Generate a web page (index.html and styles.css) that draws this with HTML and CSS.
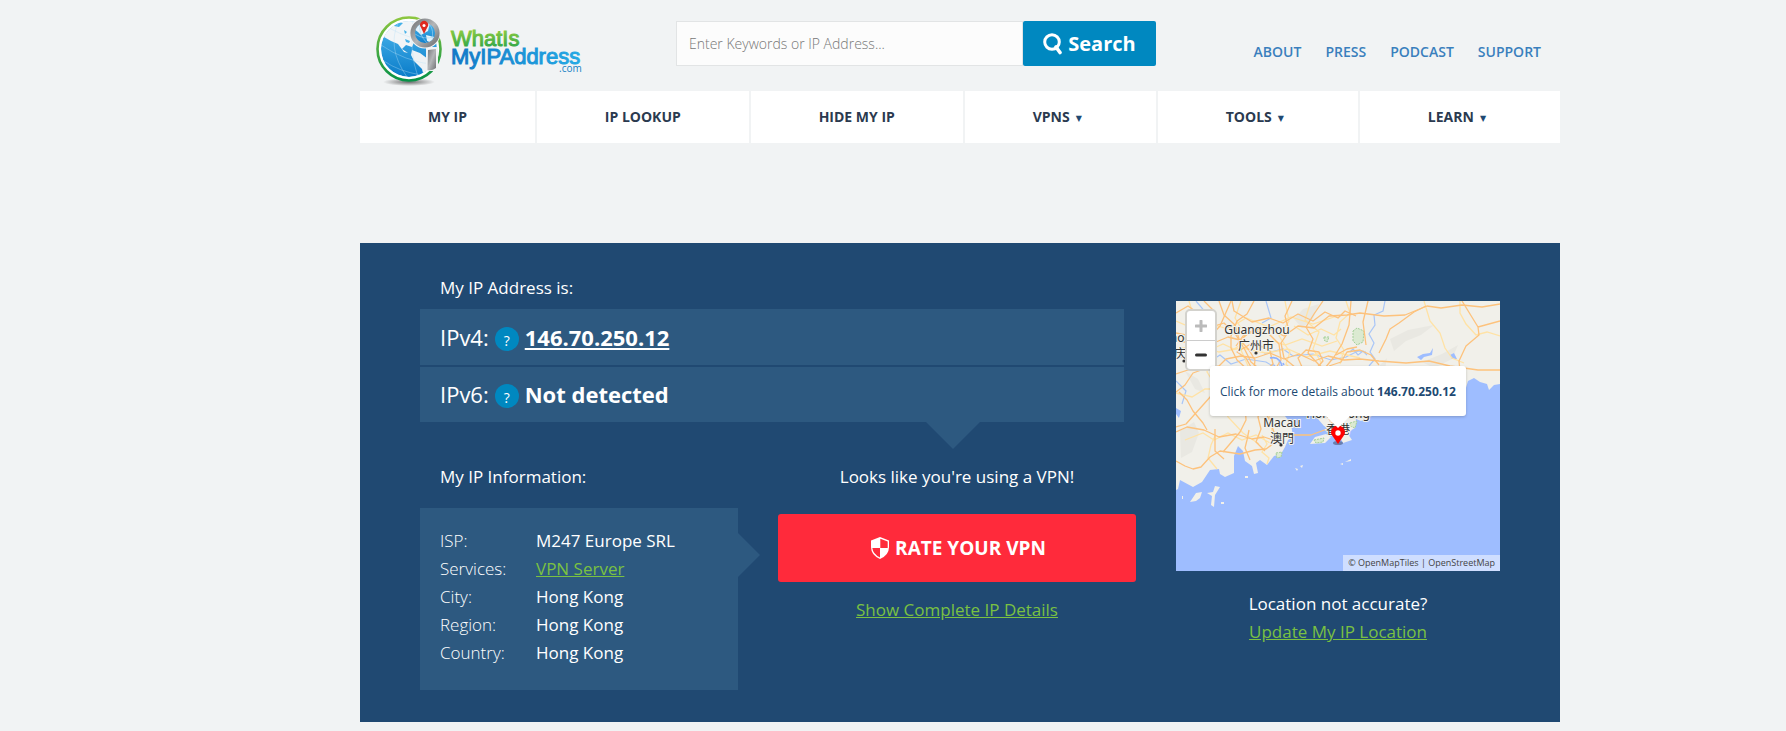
FILE: index.html
```html
<!DOCTYPE html>
<html lang="en">
<head>
<meta charset="utf-8">
<meta name="viewport" content="width=device-width, initial-scale=1">
<title>What Is My IP Address</title>
<link rel="stylesheet" href="styles.css">
</head>
<body>
<div class="page">
  <header class="header">
    <a class="logo" href="#" aria-label="WhatIsMyIPAddress.com home">
      <svg width="210" height="91" viewBox="16 0 210 91">
        <defs>
          <linearGradient id="ring" x1="0" y1="0" x2="0" y2="1"><stop offset="0" stop-color="#8cc63f"/><stop offset="1" stop-color="#079247"/></linearGradient>
          <linearGradient id="sea" x1="0" y1="0" x2="0" y2="1"><stop offset="0" stop-color="#4db8ee"/><stop offset="1" stop-color="#0a7cc9"/></linearGradient>
          <linearGradient id="metal" x1="0" y1="0" x2="1" y2="1"><stop offset="0" stop-color="#77797b"/><stop offset=".5" stop-color="#b4b6b8"/><stop offset="1" stop-color="#707274"/></linearGradient>
          <linearGradient id="green" x1="0" y1="0" x2="0" y2="1"><stop offset=".2" stop-color="#86c83f"/><stop offset=".9" stop-color="#2aa448"/></linearGradient>
          <linearGradient id="blue" x1="0" y1="0" x2="1" y2="0"><stop offset="0" stop-color="#0f78c6"/><stop offset="1" stop-color="#25a9e4"/></linearGradient>
          <radialGradient id="shade"><stop offset="0" stop-color="#333" stop-opacity=".7"/><stop offset="1" stop-color="#333" stop-opacity="0"/></radialGradient>
          <clipPath id="globe"><circle cx="49" cy="49" r="28"/></clipPath>
          <clipPath id="lens"><circle cx="65" cy="33" r="10"/></clipPath>
        </defs>
        <ellipse cx="49" cy="82" rx="26" ry="4" fill="url(#shade)"/>
        <circle cx="49" cy="49" r="31.500" fill="#fff" stroke="url(#ring)" stroke-width="2.600"/>
        <g clip-path="url(#globe)">
          <circle cx="49" cy="49" r="28" fill="url(#sea)"/>
          <path d="M24 37L27 29L37 20L58 18L65 35L59 40L55 40L52 47L46 45L42 49L48 53L44 52L38 44L31 41Z" fill="#f2f5f7"/>
          <path d="M52 50L60 53L68 59L78 59L77 64L69 79L64 77L62 69L54 61L51 55Z" fill="#eef2f5"/>
          <path d="M37 22L43 23L39 27L34 26ZM45 39L50 41L49 43L46 42ZM44 30L47 32L45 34Z" fill="#46b1e8"/>
          <g fill="none" stroke="#b8e1f6" stroke-width=".5" opacity=".75">
            <path d="M21 45Q44 61 75 65M24 61Q38 71 61 75M29 28Q51 40 76 43M39 21Q26 47 47 77M53 20Q49 52 58 77"/>
          </g>
        </g>
        <circle cx="65" cy="33" r="15.500" fill="#f1f3f4"/>
        <path d="M66 47H78V71H66Z" fill="#f1f3f4"/>
        <circle cx="65" cy="33" r="12.300" fill="url(#sea)" stroke="url(#metal)" stroke-width="4.600"/>
        <g clip-path="url(#lens)">
          <path d="M54 29L60 22L70 23L68 31L61 35L58 32ZM66 35L74 37L72 43L67 41Z" fill="#e4f2fa"/>
          <path d="M55 34Q64 40 74 37M60 24Q58 34 67 43M70 25Q74 30 72 41" fill="none" stroke="#a8d9f3" stroke-width=".6"/>
        </g>
        <path d="M64 34L61 27.500A4 4 0 1 1 67.200 27.500Z" fill="#df2a20"/>
        <circle cx="64" cy="25.500" r="1.500" fill="#fff"/>
        <path d="M68 50L76 49V68Q72 71 67.500 70Z" fill="url(#metal)"/>
        <text class="brand brand-green" x="91" y="46">WhatIs</text>
        <text class="brand brand-blue" x="91" y="64">MyIPAddress</text>
        <text class="brand-com" x="199" y="72">.com</text>
      </svg>
    </a>
    <form class="search" role="search">
      <input class="search-input" type="text" aria-label="Search" placeholder="Enter Keywords or IP Address...">
      <button class="search-button" type="button">
        <svg width="20" height="22" viewBox="0 0 20 22" fill="none" stroke="#fff" stroke-width="3"><circle cx="9" cy="9" r="7.300"/><path d="M13 14L17 19.500" stroke-width="3.600" stroke-linecap="round"/></svg>
        Search
      </button>
    </form>
    <nav class="links" aria-label="Site">
      <a href="#">ABOUT</a><a href="#">PRESS</a><a href="#">PODCAST</a><a href="#">SUPPORT</a>
    </nav>
  </header>

  <nav class="menu" aria-label="Main">
    <a href="#">MY IP</a>
    <a href="#">IP LOOKUP</a>
    <a href="#">HIDE MY IP</a>
    <a href="#">VPNS<span class="caret">▼</span></a>
    <a href="#">TOOLS<span class="caret">▼</span></a>
    <a href="#">LEARN<span class="caret">▼</span></a>
  </nav>

  <main class="panel">
    <section class="details">
      <p class="label">My IP Address is:</p>
      <div class="addresses">
        <div class="address"><span>IPv4:</span><button class="help" type="button" aria-label="About IPv4">?</button><a href="#">146.70.250.12</a></div>
        <div class="address"><span>IPv6:</span><button class="help" type="button" aria-label="About IPv6">?</button><strong>Not detected</strong></div>
      </div>
      <div class="columns">
        <div class="info">
          <p class="label">My IP Information:</p>
          <table class="facts">
            <tr><th scope="row">ISP:</th><td>M247 Europe SRL</td></tr>
            <tr><th scope="row">Services:</th><td><a class="green" href="#">VPN Server</a></td></tr>
            <tr><th scope="row">City:</th><td>Hong Kong</td></tr>
            <tr><th scope="row">Region:</th><td>Hong Kong</td></tr>
            <tr><th scope="row">Country:</th><td>Hong Kong</td></tr>
          </table>
        </div>
        <div class="vpn">
          <p>Looks like you're using a VPN!</p>
          <button class="rate" type="button">
            <svg width="18" height="22" viewBox="0 0 18 22"><path d="M9 0L18 3.500V10Q18 18 9 22Q0 18 0 10V3.500Z" fill="#fff"/><path d="M9.300 1.800L16.700 4.500V11H9.300ZM1.300 11H9V20.500Q2 17 1.300 11Z" fill="#ff2a3b"/></svg>
            RATE YOUR VPN
          </button>
          <a class="green" href="#">Show Complete IP Details</a>
        </div>
      </div>
    </section>

    <section class="location">
      <div class="map">
        <svg class="map-art" viewBox="0 0 324 270" preserveAspectRatio="xMidYMid slice" role="img" aria-label="Map of Hong Kong and Guangdong">
          <rect width="324" height="270" fill="#9ebdff"/>
          <path fill="#f1f0ea" d="M0 0H324V83L318 84L313 89L311 83L304 81L298 77L292 80L289 90L278 92L268 99L262 108H240L220 113L196 115L185 120L180 118L179 127L172 131L166 127L155 129L148 125L142 118L138 106L132 98L126 96L121 87L112 84L104 70L97 62L99 74L106 86L108 100L109 115L115 123L117 136L112 139L109 146L105 153L98 155L91 164L84 159L80 162L82 172L78 173L76 165L69 160L67 150L62 145L58 155V172L49 176L44 173L43 168L34 169L26 181L17 186L4 179L2 188L0 189Z"/>
          <g fill="#e9e8e2"><path d="M214 38L232 29L258 24L245 34L230 40L218 50ZM246 61L266 53L282 44L276 58L258 67ZM174 78L198 70L211 57L208 74L188 84ZM4 130L18 121L23 132L16 151L5 157ZM9 70L22 78L29 92L19 88ZM118 18L127 8L143 3L137 18L126 27Z"/></g>
          <path fill="#f1f0ea" d="M134 143L139 136L150 133L155 136L149 142ZM163 134L172 133L176 139L167 142ZM14 201L20 192L26 191L24 197L20 200ZM31 192L37 191L39 185L44 186L39 194L38 206L35 204L36 195ZM119 167L122 168L121 170ZM124 165L127 164L126 167ZM164 163L167 162L167 164ZM169 161L175 158L175 160ZM69 175H72V177H69ZM45 201H48V203H45ZM6 195H7V198H6Z"/>
          <g fill="#dbead1" stroke="#a4cf99" stroke-width="1" stroke-dasharray="2 1"><path d="M177 30L181 27L188 30L187 41L181 44L177 40Z"/><path d="M138 139L148 137L147 141L140 142ZM174 122L181 120L179 127L174 125ZM100 152L106 151L105 156L101 157ZM148 36L153 36L151 41L148 39Z"/></g>
          <g fill="#9ebdff"><path d="M241 56L247 53L254 52L257 47L256 54L248 56L245 59ZM274 54L278 52L281 58L276 58Z"/><path d="M0 107L5 110L3 117L0 113ZM101 57L104 64L112 75L108 78Z"/></g>
          <g fill="none" stroke="#a9c6f7" stroke-width="1.200"><path d="M0 57L18 55L30 63L44 54L55 63L70 58L90 61L100 67M209 0L207 10L198 14L199 24L193 33L198 42L194 51L199 58L193 65M88 53L107 48L117 55L137 53L155 59L170 56L182 50L190 51M174 51L177 48L182 54L187 50L191 54M0 80L10 90L6 103M20 0L31 13L20 25M90 0L95 17L86 22"/></g>
          <g fill="none" stroke="#ffe2a5" stroke-width="1.300"><path d="M0 20L21 29L35 23L52 28L70 17L93 26L115 16L137 23L164 14M13 0L18 17L29 32L35 54L31 71L43 90L52 116L67 132L83 143M65 0L59 17L69 34L64 47L73 67L69 80L75 95L92 108L96 130M109 0L113 20L103 35L114 51L110 63L128 83L135 100M135 0L129 19L143 31L137 48L145 61L142 78L157 93L165 110M0 48L24 45L43 51L66 47L90 52L112 48L130 56L154 50L184 57M248 0L254 20L264 32L269 47L276 57L288 62M284 0L284 12L290 23L300 34L311 31L324 35M0 92L16 96L29 88L48 88L65 81L80 88L98 85M36 48L47 43L58 48L71 40L84 47L98 40L109 44L126 38L146 45L161 40M9 139L27 132L38 139L52 132L66 139L80 134L94 142M39 135L35 144L32 157L41 168M86 134L91 143L86 151L93 157L91 163M118 25L132 34L145 28L158 34L165 28M170 0L174 12L164 21L160 37L168 49L164 63"/></g>
          <g fill="none" stroke="#fdc27c" stroke-width="1.300" stroke-linejoin="round"><path d="M0 12L12 5L25 14L32 27L48 22L60 34L69 49L75 61L86 70L97 80L108 93"/><path d="M0 39L13 42L26 37L40 41L52 36L64 39L77 29L94 28L108 35L122 25L138 27L153 15L171 14L184 12L208 15L229 14L251 5L265 7L286 4L306 6L324 3"/><path d="M0 91L9 84L17 72L31 67L43 65L50 58L65 55L79 57L94 52L108 58L123 53L138 60L152 55L168 59L184 58L203 60L230 62L253 60L274 65L302 69L324 69"/><path d="M43 0L48 14L59 24L63 38L73 49L79 59L77 77L83 91L87 107L94 120L100 137L105 145"/><path d="M78 0L71 13L61 20L55 35L55 47L61 59L72 69L86 73L98 70L105 59L103 43L93 33L80 30L67 35L60 45"/><path d="M116 0L109 15L113 30L105 42L108 57L120 67L131 80L142 94L149 108L154 120L167 130"/><path d="M147 0L138 13L130 26L137 38L132 52L143 64L154 71L163 86L166 102L173 116"/><path d="M175 0L173 24L166 43L158 56L149 67M203 52L210 38L214 28L223 22L238 11L250 5"/><path d="M0 131L11 126L28 129L43 136L60 133L76 138L88 136L97 139L110 135"/><path d="M0 160L9 165L17 168L25 166L34 156L44 150L64 153L79 149L90 148L105 137L116 134L135 134L151 128L165 124"/><path d="M39 128V150L48 158M47 151L53 144L64 131L70 119L69 103L61 92L48 88L35 95L27 104L10 123L0 126"/><path d="M73 129L71 139L69 147L74 159M86 104L82 116L85 128L80 141L89 150M56 0L58 10L76 21L93 17L107 22L122 13L137 20L149 11L162 17L169 10L180 15"/><path d="M3 91L11 99L17 110L27 122L31 129M0 73L15 68L19 49L31 39L44 25L55 0M28 0L39 11L27 23L19 36L0 32M181 46L171 48L160 54M149 67L155 83L149 98L153 114L163 122M192 0L187 21L190 44"/><path d="M153 65L165 61L171 51L184 49L195 54L203 64M131 76L151 72L174 69L195 72L227 69L253 73L274 68L285 71"/><path d="M286 0L302 26L324 20M302 26L303 34L290 45L283 60L284 70"/><path d="M61 51L73 44L83 44L94 50L97 63L87 71L76 68L70 57ZM122 57L130 49L143 51L147 60L138 70L126 66Z"/></g>
          <path d="M94 57Q106 54 107 72M107 62L108 64" fill="none" stroke="#8fb1ff" stroke-width="1.600"/>
          <g class="map-text">
            <text x="7" y="41">Zhaoqing</text><text x="-2" y="57">肇庆</text>
            <text x="81" y="33">Guangzhou</text><text x="80" y="49">广州市</text>
            <text x="106" y="126">Macau</text><text x="106" y="142">澳門</text>
            <text x="162" y="117">Hong Kong</text><text x="162" y="133">香港</text>
          </g>
          <g fill="#333"><circle cx="80" cy="52" r="1.600"/><circle cx="105" cy="144" r="1.600"/><circle cx="8" cy="60" r="1.600"/></g>
          <ellipse cx="162" cy="142" rx="5" ry="2" fill="#33415f" opacity=".5"/>
          <path d="M162 143L156.500 135Q155 133 155 131.500A7 7 0 0 1 169 131.500Q169 133 167.500 135Z" fill="#f00"/>
          <circle cx="162" cy="132" r="2.700" fill="#fff"/>
        </svg>
        <div class="zoom">
          <button type="button" aria-label="Zoom in" disabled><svg width="12" height="12" viewBox="0 0 12 12"><path d="M6 1V11M1 6H11" stroke="#bbb" stroke-width="3" stroke-linecap="round"/></svg></button>
          <button type="button" aria-label="Zoom out"><svg width="12" height="12" viewBox="0 0 12 12"><path d="M1.500 6H10.500" stroke="#333" stroke-width="3" stroke-linecap="round"/></svg></button>
        </div>
        <a class="popup" href="#">Click for more details about <strong>146.70.250.12</strong></a>
        <div class="credit">© OpenMapTiles | OpenStreetMap</div>
      </div>
      <p>Location not accurate?</p>
      <a class="green" href="#">Update My IP Location</a>
    </section>
  </main>
</div>
</body>
</html>
```
FILE: styles.css
```css
* { box-sizing: border-box; }

body {
  margin: 0;
  padding-left: 134px;
  background: #f1f3f4;
  color: #fff;
  font: 17px/28px "Open Sans", "Noto Sans", "Noto Sans CJK SC", sans-serif;
}

p { margin: 0; }
button, input { font-family: inherit; }
button { cursor: pointer; }

.page { max-width: 1200px; margin: 0 auto; }

/* Header */
.header { display: flex; align-items: flex-start; }
.logo { flex: none; margin-left: 16px; height: 91px; }
.logo svg { display: block; }
.brand { font: 22px "Liberation Sans", Arial, sans-serif; stroke-width: 1; }
.brand-green { fill: url(#green); stroke: url(#green); }
.brand-blue { fill: url(#blue); stroke: url(#blue); }
.brand-com { font: 10px "Open Sans", sans-serif; fill: #1580c4; }

.search { display: flex; flex: 0 1 480px; height: 45px; margin: 21px 0 0 90px; }
.search-input {
  flex: 1;
  min-width: 0;
  padding: 0 12px;
  border: 1px solid #e2e4e5;
  background: #fcfcfc;
  color: #333;
  font-size: 14px;
  font-weight: 300;
}
.search-input::placeholder { color: #777; opacity: 1; }
.search-button {
  display: flex;
  align-items: center;
  justify-content: center;
  gap: 5px;
  width: 133px;
  padding: 0;
  border: 0;
  border-radius: 2px;
  background: #0088c0;
  color: #fff;
  font-size: 20px;
  font-weight: 700;
}

.links { display: flex; gap: 24px; margin: 38px 19px 0 auto; }
.links a { color: #3a7fbd; font-size: 14px; font-weight: 600; text-decoration: none; }

/* Main menu */
.menu { display: flex; gap: 2px; }
.menu a {
  flex: 1 1 auto;
  background: #fff;
  color: #2b3a4f;
  font-size: 14px;
  font-weight: 700;
  line-height: 52px;
  text-align: center;
  text-decoration: none;
}
.caret {
  margin: 0 6px;
  color: #204972;
  font: 8px "DejaVu Sans", sans-serif;
  vertical-align: 1px;
}

/* Address panel */
.panel {
  display: flex;
  gap: 40px;
  margin-top: 100px;
  padding: 31px 60px 32px;
  background: #204972;
}
.details { flex: 1; }
.label { padding-left: 20px; }

.addresses {
  position: relative;
  display: grid;
  gap: 2px;
  margin: 7px 12px 41px 0;
}
.addresses::after {
  content: "";
  position: absolute;
  top: 100%;
  left: 506px;
  border: solid transparent;
  border-width: 27px 27px 0;
  border-top-color: #2d5980;
}
.address {
  display: flex;
  align-items: baseline;
  gap: 6px;
  padding-left: 20px;
  background: #2d5980;
  font-size: 22px;
  line-height: 56px;
}
.address + .address { line-height: 55px; }
.address a { color: #fff; font-weight: 700; }
.help {
  width: 24px;
  height: 24px;
  padding: 3px 0 0;
  border: 0;
  border-radius: 50%;
  background: #0088c0;
  color: #fff;
  font-size: 14px;
  line-height: 21px;
}

.columns { display: flex; gap: 40px; }
.info { flex: none; position: relative; width: 318px; }
.info::after {
  content: "";
  position: absolute;
  top: 70px;
  left: 100%;
  border: solid transparent;
  border-width: 22px 0 22px 22px;
  border-left-color: #2d5980;
}
.facts {
  width: 100%;
  margin-top: 17px;
  padding: 19px 20px 23px;
  border-spacing: 0;
  background: #2d5980;
}
.facts th { width: 96px; padding: 0; font-weight: 300; text-align: left; }
.facts td { padding: 0; }
.green { color: #7ac142; }

.vpn { flex: 1; text-align: center; }
.rate {
  display: flex;
  align-items: center;
  justify-content: center;
  gap: 6px;
  width: 100%;
  height: 68px;
  margin: 23px 0 14px;
  padding: 0 6px 0 9px;
  border: 0;
  border-radius: 3px;
  background: #ff2a3b;
  color: #fff;
  font-size: 19px;
  font-weight: 700;
}

/* Map */
.location { flex: none; width: 324px; padding-top: 27px; text-align: center; }
.map { position: relative; height: 270px; margin-bottom: 19px; overflow: hidden; }
.map-art { display: block; width: 100%; height: 100%; }
.map-text {
  fill: #333;
  stroke: #f4f3ee;
  stroke-width: 2;
  paint-order: stroke;
  font: 12px "Noto Sans", "Noto Sans CJK SC", sans-serif;
  text-anchor: middle;
}
.zoom {
  position: absolute;
  top: 8px;
  left: 9px;
  width: 32px;
  border: 2px solid #d3d2cd;
  border-radius: 5px;
  background: #fff;
}
.zoom button {
  display: grid;
  place-items: center;
  width: 100%;
  height: 29px;
  padding: 0;
  border: 0;
  background: none;
}
.zoom button + button { border-top: 1px solid #ccc; }
.popup {
  position: absolute;
  top: 65px;
  left: 34px;
  padding: 12px 10px 10px;
  border-radius: 3px;
  background: #fff;
  box-shadow: 0 1px 3px #0003;
  color: #204972;
  font-size: 12px;
  white-space: nowrap;
  text-decoration: none;
}
.popup::after {
  content: "";
  position: absolute;
  top: 100%;
  left: 50%;
  margin-left: -12px;
  border: solid transparent;
  border-width: 12px 12px 0;
  border-top-color: #fff;
}
.credit {
  position: absolute;
  right: 0;
  bottom: 0;
  padding: 0 5px;
  background: #ffffff80;
  color: #444;
  font-size: 9px;
  line-height: 16px;
}
```
